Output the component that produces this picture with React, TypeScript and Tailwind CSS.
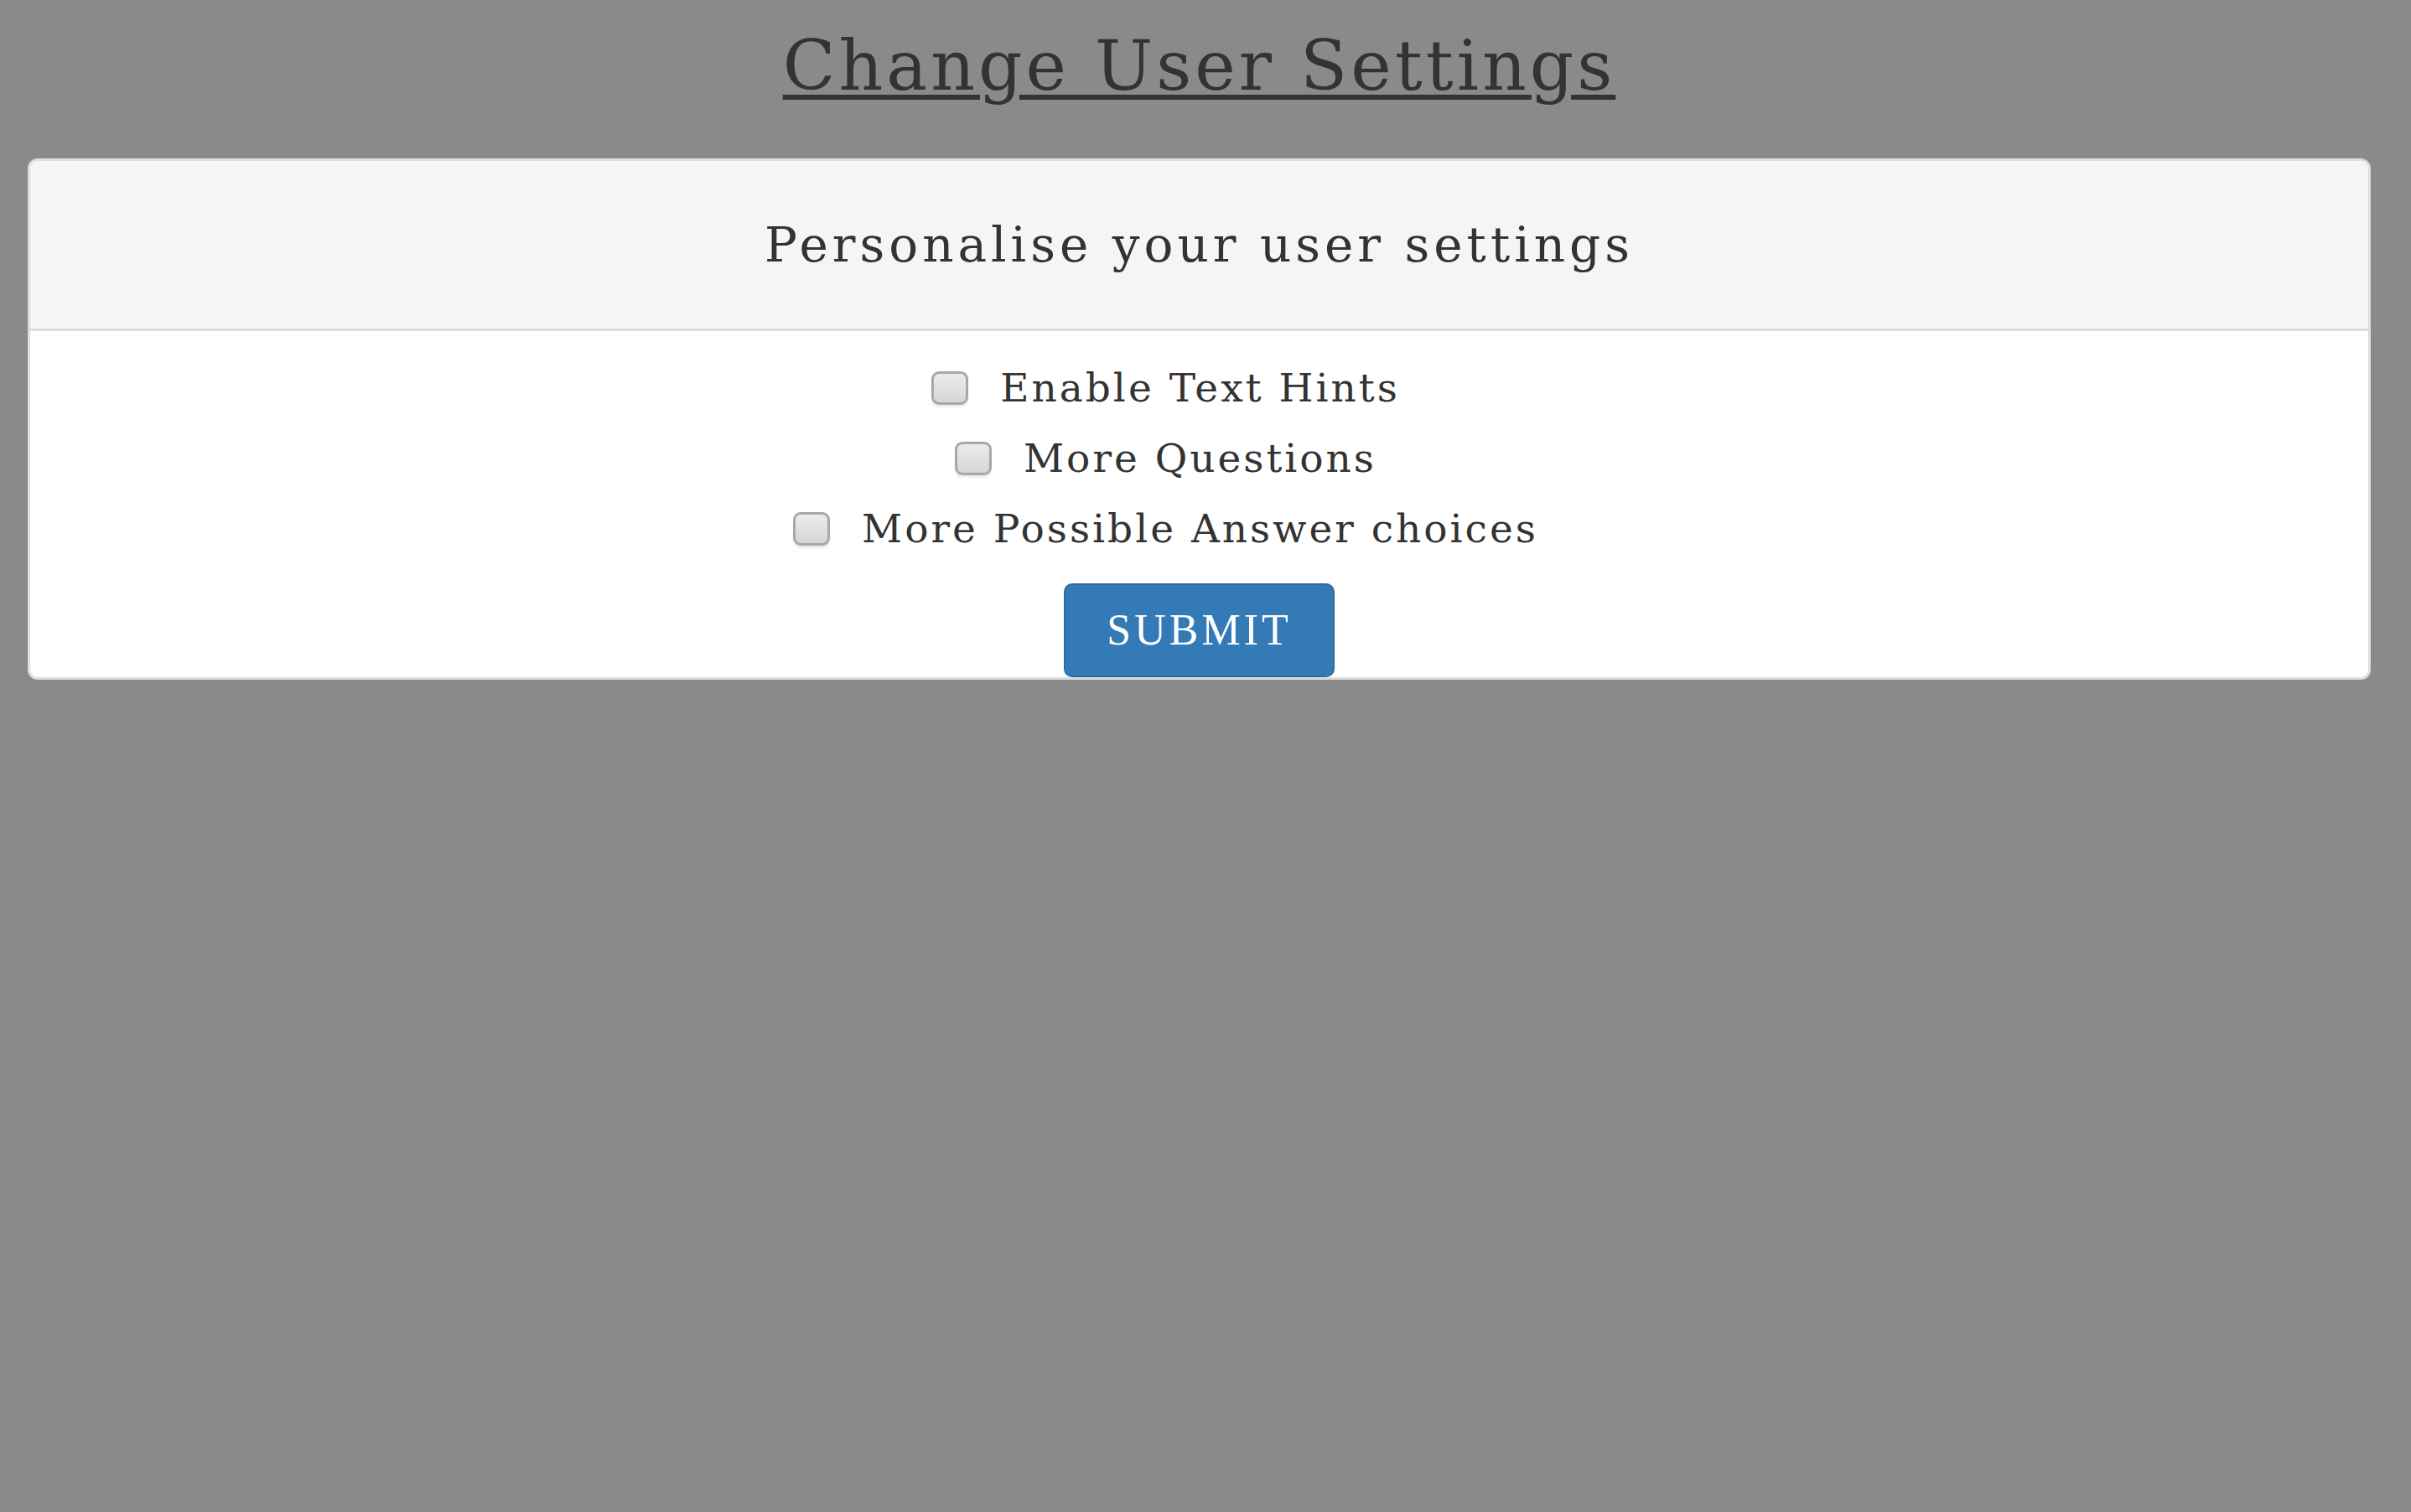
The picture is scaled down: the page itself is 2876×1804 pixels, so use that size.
const SETTINGS = [
	{ id: "hints", label: "Enable Text Hints" },
	{ id: "questions", label: "More Questions" },
	{ id: "answers", label: "More Possible Answer choices" },
];

function FakeCheckbox() {
	return (
		<span className="block h-[40px] w-[44px] shrink-0 rounded-[9px] border-[3px] border-[#a8a8a8] bg-gradient-to-b from-[#ececec] to-[#d6d6d6] shadow-[0_3px_2px_rgba(0,0,0,0.08)]" />
	);
}

function SettingRow({ label }: { label: string }) {
	return (
		<label className="flex h-[84px] cursor-pointer items-center gap-[38px]">
			<FakeCheckbox />
			<span className="text-[47px] text-[#333333] leading-[84px] tracking-[3px]">
				{label}
			</span>
		</label>
	);
}

export default function App() {
	return (
		<div className="min-h-screen bg-[#8a8a8a] pt-[38px] pr-[48px] pl-[33px] font-['DejaVu_Serif',serif]">
			{/* Title */}
			<h1 className="text-center text-[82px] text-[#333333] leading-none tracking-[4px]">
				<span className="underline decoration-[length:6px] underline-offset-[6px]">
					Change User Settings
				</span>
			</h1>

			{/* Panel */}
			<div className="mt-[69px] overflow-hidden rounded-[12px] border-[3px] border-[#dddddd] bg-white">
				<div className="flex h-[203px] items-center justify-center border-[#dddddd] border-b-[3px] bg-[#f5f5f5]">
					<h2 className="text-[58px] text-[#333333] leading-none tracking-[5px]">
						Personalise your user settings
					</h2>
				</div>

				<div className="flex flex-col items-center pt-[26px]">
					<div className="flex flex-col items-center pr-[80px]">
						{SETTINGS.map((s) => (
							<SettingRow key={s.id} label={s.label} />
						))}
					</div>
					<button
						type="button"
						className="mt-[23px] flex h-[112px] w-[323px] items-center justify-center rounded-[10px] border-2 border-[#2e6da4] bg-[#337ab7] font-['Liberation_Serif',serif] text-[52px] text-white tracking-[4px]"
					>
						SUBMIT
					</button>
				</div>
			</div>
		</div>
	);
}
